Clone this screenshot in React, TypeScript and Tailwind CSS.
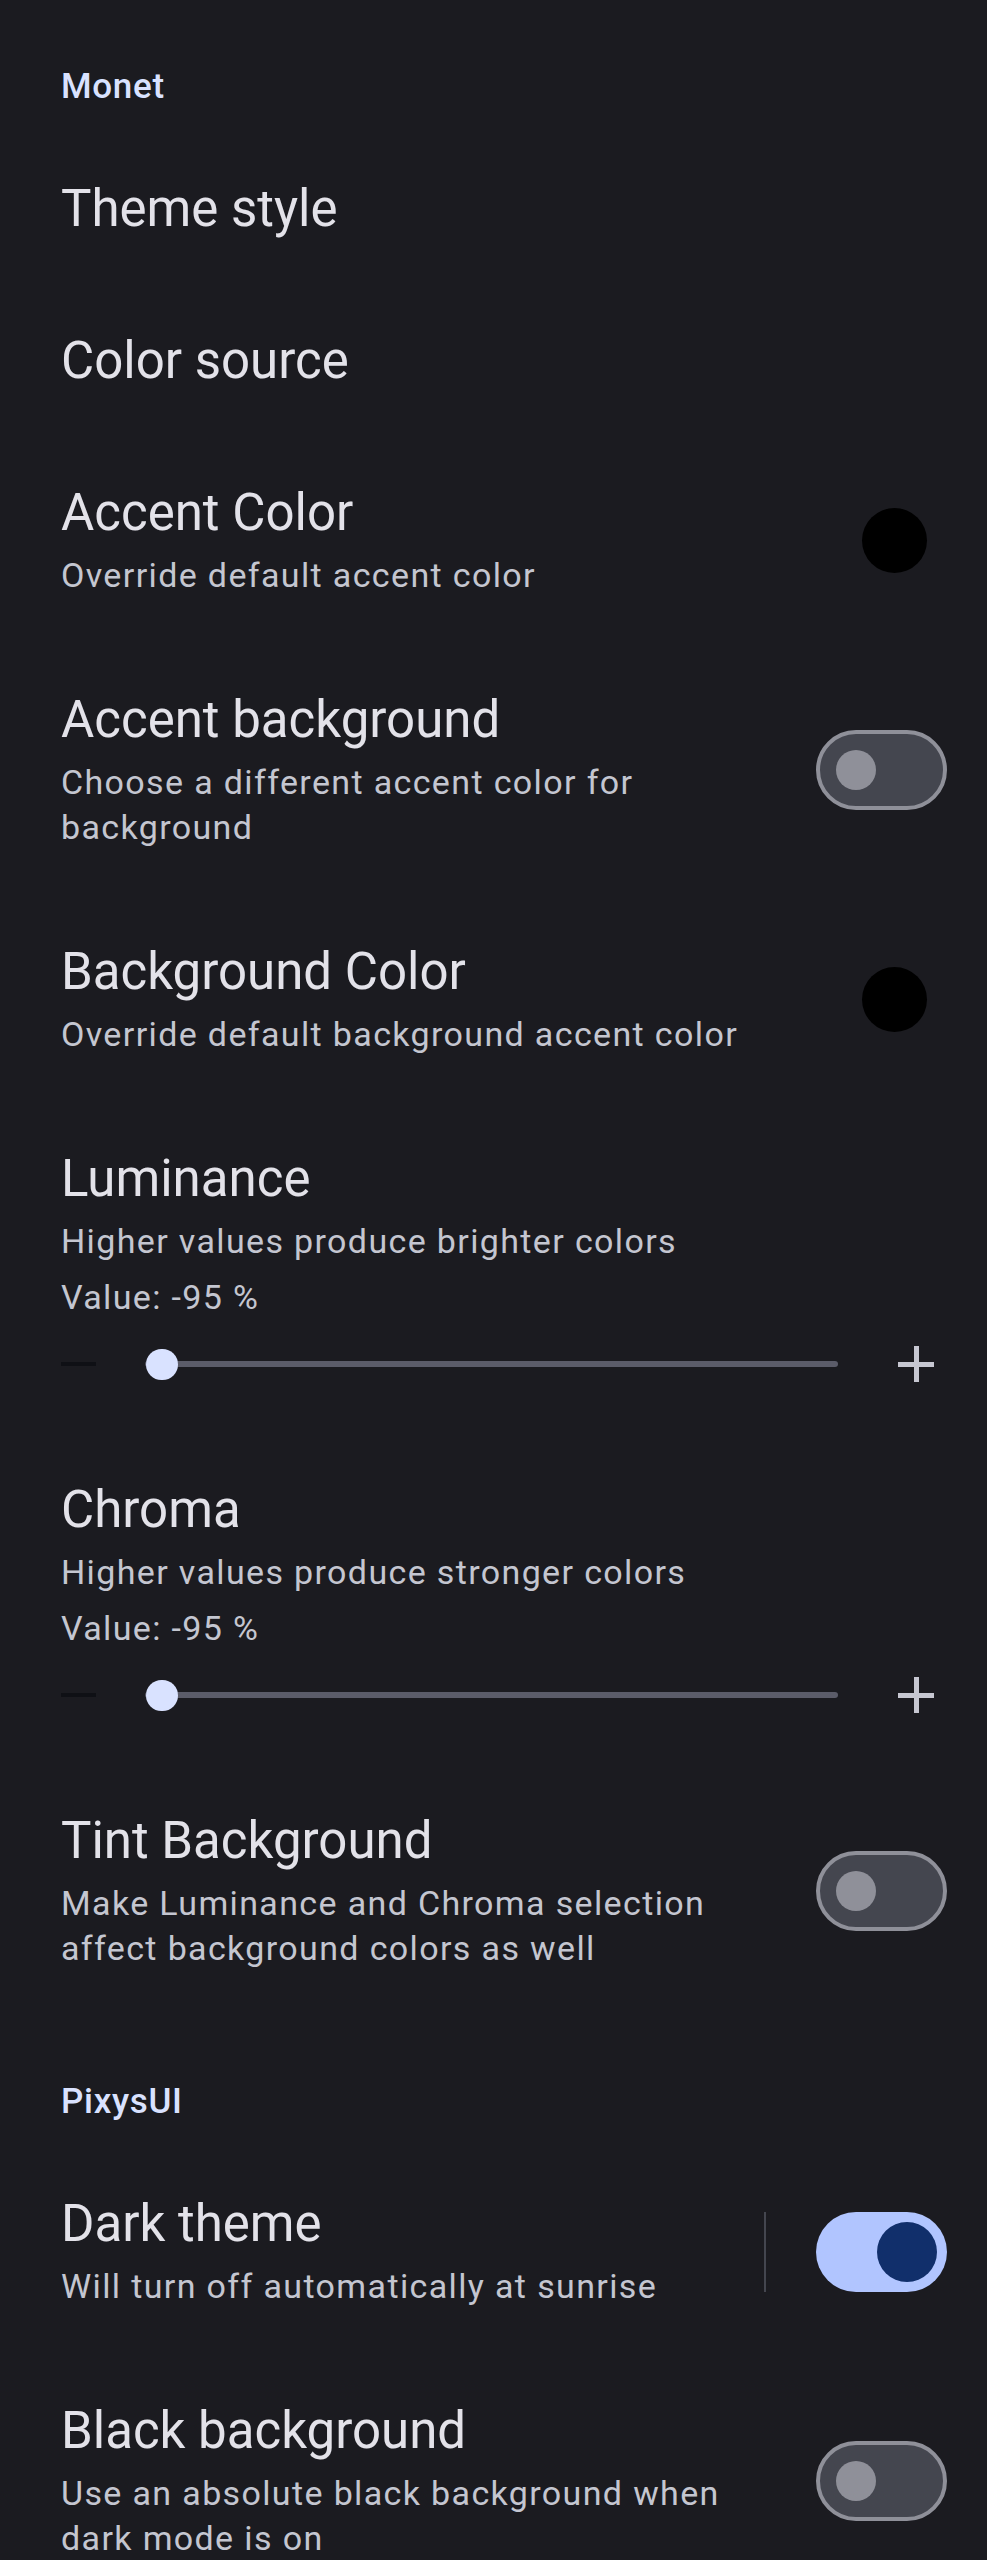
import React from "react";

type Widget = "none" | "dot" | "off" | "on-divider";

type Pref = {
  title: string;
  summary?: string;
  widget?: Widget;
};

const Toggle = ({ on }: { on: boolean }) => {
  if (on) {
    return (
      <div className="w-[131px] h-[80px] rounded-full bg-[#b1c5ff] flex items-center justify-end pr-[10px]">
        <div className="w-[60px] h-[60px] rounded-full bg-[#112f6b]" />
      </div>
    );
  }
  return (
    <div className="w-[131px] h-[80px] rounded-full border-4 border-[#8f9099] bg-[#44464f] flex items-center pl-[16px]">
      <div className="w-10 h-10 rounded-full bg-[#8f9099]" />
    </div>
  );
};

const SectionHeader = ({ label, top }: { label: string; top: string }) => (
  <div className={`${top} pb-[26px]`}>
    <div className="text-[35px] leading-[40px] font-medium tracking-[0.02em] text-[#d9e2ff]">{label}</div>
  </div>
);

const PrefRow = ({ title, summary, widget = "none" }: Pref) => (
  <div className="flex items-center py-[46px]">
    <div className="flex-1 min-w-0 pr-[56px]">
      <div className="text-[51px] leading-[60px] text-[#e3e2e9]">{title}</div>
      {summary && (
        <div className="mt-[10px] text-[34px] leading-[45px] tracking-[0.04em] text-[#c4c6d0]">
          {summary}
        </div>
      )}
    </div>
    {widget === "dot" && (
      <div className="w-[131px] flex justify-end shrink-0">
        <div className="w-[65px] h-[65px] rounded-full bg-black mr-[20px]" />
      </div>
    )}
    {widget === "off" && (
      <div className="shrink-0">
        <Toggle on={false} />
      </div>
    )}
    {widget === "on-divider" && (
      <div className="shrink-0 flex items-center">
        <div className="w-[2px] h-[80px] bg-[#44464f] mr-[50px]" />
        <Toggle on />
      </div>
    )}
  </div>
);

const SliderRow = ({ title, summary, value }: { title: string; summary: string; value: number }) => {
  // range is -100..100
  const pct = ((value + 100) / 200) * 100;
  return (
    <div className="py-[46px]">
      <div className="text-[51px] leading-[60px] text-[#e3e2e9]">{title}</div>
      <div className="mt-[10px] text-[34px] leading-[45px] tracking-[0.04em] text-[#c4c6d0]">{summary}</div>
      <div className="mt-[11px] text-[34px] leading-[45px] tracking-[0.04em] text-[#c4c6d0]">
        Value: {value} %
      </div>
      <div className="mt-[20px] h-[48px] flex items-center pr-[13px]">
        <div className="w-[35px] h-[4px] bg-[#0f1015] shrink-0" />
        <div className="relative flex-1 h-[6px] ml-[49px] mr-[60px] rounded-full bg-[#5b5c69]">
          <div
            className="absolute top-1/2 w-[32px] h-[31px] -ml-[16px] -mt-[15.5px] rounded-full bg-[#d9e2ff]"
            style={{ left: `${pct}%` }}
          />
        </div>
        <div className="relative w-[36px] h-[36px] shrink-0">
          <div className="absolute left-0 right-0 top-[15.5px] h-[5px] bg-[#c6c7d1]" />
          <div className="absolute top-0 bottom-0 left-[15.5px] w-[5px] bg-[#c6c7d1]" />
        </div>
      </div>
    </div>
  );
};

export default function App() {
  return (
    <div className="min-h-[2560px] bg-[#1b1b20] pl-[61px] pr-[40px] font-['Roboto',sans-serif]">
      <SectionHeader label="Monet" top="pt-[67px]" />
      <PrefRow title="Theme style" />
      <PrefRow title="Color source" />
      <PrefRow title="Accent Color" summary="Override default accent color" widget="dot" />
      <PrefRow
        title="Accent background"
        summary="Choose a different accent color for background"
        widget="off"
      />
      <PrefRow
        title="Background Color"
        summary="Override default background accent color"
        widget="dot"
      />
      <SliderRow title="Luminance" summary="Higher values produce brighter colors" value={-95} />
      <SliderRow title="Chroma" summary="Higher values produce stronger colors" value={-95} />
      <PrefRow
        title="Tint Background"
        summary="Make Luminance and Chroma selection affect background colors as well"
        widget="off"
      />
      <SectionHeader label="PixysUI" top="pt-[65px]" />
      <PrefRow
        title="Dark theme"
        summary="Will turn off automatically at sunrise"
        widget="on-divider"
      />
      <PrefRow
        title="Black background"
        summary="Use an absolute black background when dark mode is on"
        widget="off"
      />
    </div>
  );
}
